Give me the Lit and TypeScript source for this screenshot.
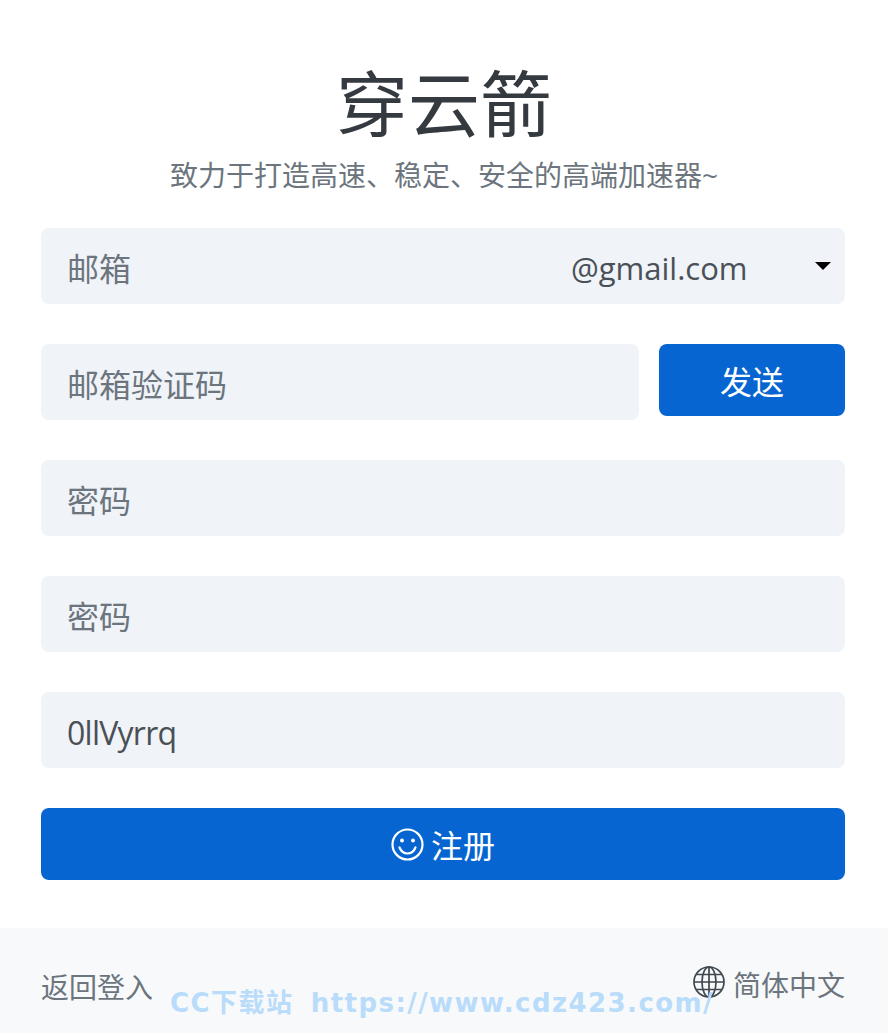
import { LitElement, html, css } from "lit";
import { customElement } from "lit/decorators.js";

@customElement("app-root")
export class AppRoot extends LitElement {
  static styles = css`
    :host {
      display: block;
      position: relative;
      height: 1033px;
      overflow: hidden;
      background: #fff;
      font-family: "Open Sans", "Noto Sans CJK SC", sans-serif;
      color: #495057;
    }
    .head {
      height: 228px;
      padding-top: 58px;
      box-sizing: border-box;
      text-align: center;
    }
    h1 {
      margin: 0 0 9px;
      font-size: 72px;
      font-weight: 400;
      line-height: 90px;
      color: #343a40;
    }
    .sub {
      margin: 0;
      font-size: 28px;
      line-height: 36px;
      color: #6c757d;
    }
    form {
      display: flex;
      flex-direction: column;
      gap: 40px;
      padding: 0 43px 0 41px;
    }
    .field {
      display: flex;
      align-items: center;
      height: 76px;
      flex: none;
      border-radius: 8px;
      background: #f0f3f8;
      min-width: 0;
    }
    .row .field {
      flex: 1;
    }
    input {
      flex: 1;
      min-width: 0;
      height: 100%;
      box-sizing: border-box;
      padding: 4px 26px 0;
      border: 0;
      outline: 0;
      background: transparent;
      font: inherit;
      font-size: 32px;
      color: #495057;
      letter-spacing: -0.75px;
    }
    input::placeholder {
      color: #6c757d;
      opacity: 1;
      letter-spacing: 0;
    }
    .domain {
      display: flex;
      align-items: center;
      width: 274px;
      box-sizing: border-box;
      padding: 4px 14px 0 0;
      font-size: 31px;
      justify-content: space-between;
    }
    .caret {
      width: 0;
      height: 0;
      border-left: 8px solid transparent;
      border-right: 8px solid transparent;
      border-top: 8px solid #000;
      margin-top: -4px;
    }
    .row {
      display: flex;
      align-items: flex-start;
      gap: 20px;
    }
    button {
      height: 72px;
      flex: none;
      border: 0;
      border-radius: 8px;
      background: #0665d0;
      color: #fff;
      font: inherit;
      font-size: 32px;
      display: flex;
      align-items: center;
      justify-content: center;
      gap: 7px;
      padding: 0;
    }
    .send {
      width: 186px;
    }
    .foot {
      display: flex;
      justify-content: space-between;
      align-items: center;
      height: 105px;
      margin-top: 48px;
      padding: 0 43px 0 41px;
      background: #f8f9fb;
      font-size: 28px;
      color: #6c757d;
    }
    .lang {
      display: flex;
      align-items: center;
      gap: 8px;
      margin-top: 3px;
    }
    .lang span {
      margin-top: 4px;
    }
    .back {
      margin-top: 11px;
    }
    .mark {
      position: absolute;
      left: 170px;
      top: 985px;
      font-family: "DejaVu Sans", "Noto Sans CJK SC", sans-serif;
      font-weight: 700;
      font-size: 26px;
      letter-spacing: 1.43px;
      word-spacing: 7px;
      line-height: 36px;
      color: #b9dcfa;
      white-space: nowrap;
    }
  `;

  render() {
    return html`
      <div class="head">
        <h1>穿云箭</h1>
        <p class="sub">致力于打造高速、稳定、安全的高端加速器~</p>
      </div>
      <form>
        <div class="field">
          <input placeholder="邮箱" />
          <div class="domain"><span>@gmail.com</span><i class="caret"></i></div>
        </div>
        <div class="row">
          <div class="field"><input placeholder="邮箱验证码" /></div>
          <button class="send" type="button">发送</button>
        </div>
        <div class="field"><input type="password" placeholder="密码" /></div>
        <div class="field"><input type="password" placeholder="密码" /></div>
        <div class="field"><input value="0llVyrrq" /></div>
        <button type="button">
          <svg width="33" height="33" viewBox="0 0 33 33" fill="none" stroke="#fff" stroke-width="2.2">
            <circle cx="16.5" cy="16.5" r="15" />
            <path d="M8.5 19.5c1.600 4 4.500 6 8 6s6.400-2 8-6" stroke-linecap="round" />
            <circle cx="11" cy="12.500" r="2" fill="#fff" stroke="none" />
            <circle cx="22" cy="12.500" r="2" fill="#fff" stroke="none" />
          </svg>
          注册
        </button>
      </form>
      <div class="foot">
        <span class="back">返回登入</span>
        <div class="lang">
          <svg width="32" height="32" viewBox="0 0 32 32" fill="none" stroke="#3f474f" stroke-width="1.7">
            <circle cx="16" cy="16" r="15" />
            <ellipse cx="16" cy="16" rx="7" ry="15" />
            <path d="M16 1v30M1 16h30M3.500 8.500h25M3.500 23.500h25" />
          </svg>
          <span>简体中文</span>
        </div>
      </div>
      <div class="mark">CC下载站 https://www.cdz423.com/</div>
    `;
  }
}
